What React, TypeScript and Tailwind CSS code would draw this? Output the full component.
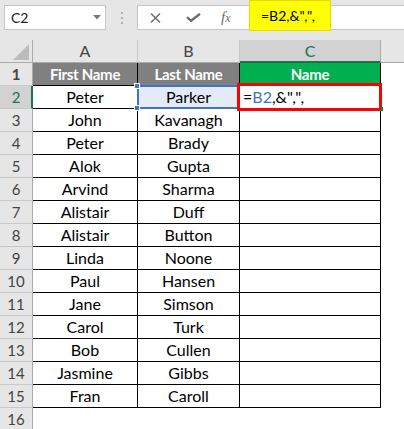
import React from "react"

const people: [string, string][] = [
  ["Peter", "Parker"],
  ["John", "Kavanagh"],
  ["Peter", "Brady"],
  ["Alok", "Gupta"],
  ["Arvind", "Sharma"],
  ["Alistair", "Duff"],
  ["Alistair", "Button"],
  ["Linda", "Noone"],
  ["Paul", "Hansen"],
  ["Jane", "Simson"],
  ["Carol", "Turk"],
  ["Bob", "Cullen"],
  ["Jasmine", "Gibbs"],
  ["Fran", "Caroll"],
]

function FormulaBar() {
  return (
    <div className="flex h-[40px] items-start bg-[#e6e6e6] pl-[4px] pt-[5px]">
      {/* Name box */}
      <div className="flex h-[25px] w-[102px] items-center justify-between border border-[#c6c6c6] bg-white pl-[6px] pr-[4px] text-[14px] text-[#222]">
        <span>C2</span>
        <svg width="8" height="5" viewBox="0 0 8 5">
          <path d="M0 0h8L4 4.5z" fill="#7a7a7a" />
        </svg>
      </div>
      {/* Grip dots */}
      <div className="flex w-[31px] flex-col items-center gap-[3px] pt-[7px]">
        <span className="h-[2px] w-[2px] bg-[#b0b0b0]" />
        <span className="h-[2px] w-[2px] bg-[#b0b0b0]" />
        <span className="h-[2px] w-[2px] bg-[#b0b0b0]" />
      </div>
      {/* Formula box */}
      <div className="flex h-[25px] flex-1 items-start border border-r-0 border-[#c6c6c6] bg-white">
        <div className="flex h-full w-[111px] items-center">
          <svg className="ml-[12px]" width="11" height="10" viewBox="0 0 11 10">
            <path d="M1 0.5l9 9M10 0.5l-9 9" stroke="#6e6e6e" strokeWidth="1.5" />
          </svg>
          <svg className="ml-[25px]" width="15" height="9" viewBox="0 0 15 9">
            <path d="M1 4.2l4 3.6L14 0.8" stroke="#6e6e6e" strokeWidth="2.4" fill="none" />
          </svg>
          <span className="ml-[20px] font-['Liberation_Serif',serif] text-[15px] italic leading-none text-[#6e6e6e]">
            f<span className="text-[12px]">x</span>
          </span>
        </div>
        <div className="-mt-[6px] flex h-[31px] w-[82px] items-center border border-[#e8d800] bg-[#ffff00] pl-[11px] text-[14px] text-black">
          =B2,&amp;<span className="tracking-[1px]">",",</span>
        </div>
      </div>
    </div>
  )
}

function ColumnHeaders() {
  return (
    <div className="flex h-[23px] bg-[#e6e6e6] text-[16px] text-[#444]">
      <div className="flex w-[33px] items-end justify-end border-r border-b border-[#ababab] pb-[2px] pr-[3px]">
        <svg width="16" height="16" viewBox="0 0 16 16">
          <path d="M16 0V16H0z" fill="#bcbcbc" />
        </svg>
      </div>
      <div className="flex w-[105px] items-center justify-center border-r border-b border-r-[#c8c8c8] border-b-[#ababab]">
        A
      </div>
      <div className="flex w-[102px] items-center justify-center border-r border-b border-r-[#c8c8c8] border-b-[#ababab]">
        B
      </div>
      <div className="flex w-[141px] items-center justify-center border-r border-b-2 border-r-[#ababab] border-b-[#217346] bg-[#d2d2d2] text-[#217346]">
        C
      </div>
      <div className="flex-1 border-b border-[#ababab]" />
    </div>
  )
}

function RowHead({ n, active }: { n: number; active?: boolean }) {
  return (
    <div
      className={
        active
          ? "flex w-[33px] items-center justify-center border-r-2 border-b border-r-[#217346] border-b-[#c8c8c8] bg-[#d2d2d2] pl-[1px] text-[15px] text-[#217346]"
          : "flex w-[33px] items-center justify-center border-r border-b border-r-[#ababab] border-b-[#c8c8c8] bg-[#e6e6e6] text-[15px] text-[#444]"
      }
    >
      {n}
    </div>
  )
}

export default function App() {
  return (
    <div className="h-[429px] w-[404px] overflow-hidden bg-white font-['Lato',sans-serif] text-[16px] text-black">
      <FormulaBar />
      <ColumnHeaders />

      {/* Row 1: headers */}
      <div className="flex h-[23px] text-[15px] font-bold tracking-[-0.3px] text-white">
        <RowHead n={1} />
        <div className="flex w-[105px] items-center justify-center border-r border-b border-black bg-[#808080]">
          First Name
        </div>
        <div className="flex w-[102px] items-center justify-center border-r border-b border-black bg-[#808080]">
          Last Name
        </div>
        <div className="flex w-[141px] items-center justify-center border-r border-b border-black bg-[#00b050]">
          Name
        </div>
      </div>

      {people.map(([first, last], i) => {
        const n = i + 2
        const active = n === 2
        return (
          <div key={n} className="flex h-[23px]">
            <RowHead n={n} active={active} />
            <div className="flex w-[105px] items-center justify-center border-r border-b border-black">
              {first}
            </div>
            <div
              className={
                active
                  ? "relative flex w-[102px] items-center justify-center border-r border-b border-black bg-[#e3ebf7]"
                  : "flex w-[102px] items-center justify-center border-r border-b border-black"
              }
            >
              {last}
              {active && (
                <>
                  <span className="absolute -inset-px border-2 border-[#4472c4]" />
                  <span className="absolute -left-[4px] -top-[3px] h-[6px] w-[6px] border border-white bg-[#4472c4]" />
                  <span className="absolute -bottom-[3px] -left-[4px] h-[6px] w-[6px] border border-white bg-[#4472c4]" />
                </>
              )}
            </div>
            <div
              className={
                active
                  ? "relative flex w-[141px] items-center border-r border-b border-black pl-[3px]"
                  : "w-[141px] border-r border-b border-black"
              }
            >
              {active && (
                <>
                  <span>
                    =<span className="text-[#4472c4]">B2</span>,&amp;
                    <span className="tracking-[1px]">",",</span>
                  </span>
                  <span className="absolute -bottom-[3px] -left-[3px] -right-[2px] -top-[3px] border-[3px] border-[#ff0000]" />
                  <span className="absolute -bottom-[3px] -right-[3px] h-[4px] w-[3px] bg-[#217346]" />
                </>
              )}
            </div>
          </div>
        )
      })}

      {/* Row 16 */}
      <div className="flex h-[23px]">
        <RowHead n={16} />
      </div>
    </div>
  )
}
